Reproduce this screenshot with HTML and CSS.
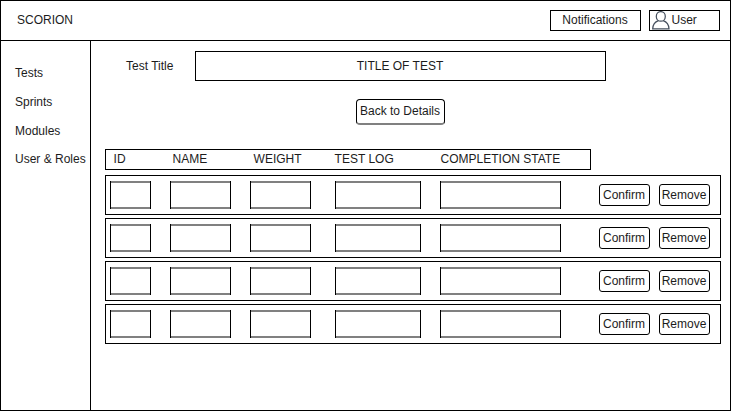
FILE: index.html
```html
<!DOCTYPE html>
<html lang="en">
<head>
<meta charset="utf-8">
<title>Scorion</title>
<link rel="stylesheet" href="styles.css">
</head>
<body>
<div class="window">
  <header class="topbar">
    <div class="brand">SCORION</div>
    <div class="notifications">Notifications</div>
    <div class="user">
      <svg class="avatar" viewBox="0 0 18 19" width="18" height="19" fill="none" stroke="#46505e" stroke-width="1.25">
        <ellipse cx="8.8" cy="5.4" rx="4.5" ry="4.8"/>
        <path d="M6.4 9.6C3 10.8 .9 13.4 .7 17.8H17C16.8 13.4 14.7 10.8 11.2 9.6"/>
      </svg>
      <span>User</span>
    </div>
  </header>
  <div class="body">
    <nav class="sidebar">
      <a>Tests</a>
      <a>Sprints</a>
      <a>Modules</a>
      <a class="last">User &amp; Roles</a>
    </nav>
    <main class="content">
      <div class="title-row">
        <label>Test Title</label>
        <div class="title-box">TITLE OF TEST</div>
      </div>
      <button class="back">Back to Details</button>
      <div class="table-head">
        <span>ID</span><span>NAME</span><span>WEIGHT</span><span>TEST LOG</span><span>COMPLETION STATE</span>
      </div>
      <div class="rows">
        <div class="row"><i></i><i></i><i></i><i></i><i></i><button>Confirm</button><button>Remove</button></div>
        <div class="row"><i></i><i></i><i></i><i></i><i></i><button>Confirm</button><button>Remove</button></div>
        <div class="row"><i></i><i></i><i></i><i></i><i></i><button>Confirm</button><button>Remove</button></div>
        <div class="row"><i></i><i></i><i></i><i></i><i></i><button>Confirm</button><button>Remove</button></div>
      </div>
    </main>
  </div>
</div>
</body>
</html>
```
FILE: styles.css
```css
* {
  box-sizing: border-box;
}

body {
  margin: 0;
  background: #fff;
  color: #1c1c1c;
  font: 12px/14px "Liberation Sans", Arial, sans-serif;
  white-space: nowrap;
}

.window {
  display: flex;
  flex-direction: column;
  width: 731px;
  height: 411px;
  border: 1px solid #000;
}

.topbar {
  display: flex;
  height: 40px;
  padding: 9px 10px 0 16px;
  border-bottom: 1px solid #000;
}

.brand {
  flex: 1;
  padding-top: 3px;
}

.notifications {
  width: 91px;
  height: 21px;
  margin-right: 8px;
  padding: 2px 1px 0 0;
  border: 1px solid #000;
  text-align: center;
}

.user {
  display: flex;
  width: 71px;
  height: 21px;
  padding: 2px 0 0 2px;
  border: 1px solid #000;
}

.avatar {
  flex: none;
  margin: -2px 1.5px 0 0;
}

.body {
  display: flex;
  flex: 1;
}

.sidebar {
  display: flex;
  flex-direction: column;
  gap: 15px;
  width: 90px;
  padding: 25px 0 0 14px;
  border-right: 1px solid #000;
}

.sidebar .last {
  margin-top: -1px;
}

.content {
  flex: 1;
  padding: 10px 9px 0 14px;
}

.title-row {
  display: flex;
  height: 30px;
}

.title-row label {
  width: 90px;
  padding: 8px 0 0 21px;
}

.title-box {
  width: 411px;
  padding: 7px 1px 0 0;
  border: 1px solid #000;
  text-align: center;
}

button {
  padding: 0 1px 0 0;
  border: 1px solid #000;
  border-radius: 3px;
  background: #fff;
  color: inherit;
  font: inherit;
}

.back {
  display: block;
  width: 89px;
  height: 26px;
  margin: 18px 0 0 251px;
  padding-bottom: 1px;
  border-radius: 4px;
  border-bottom: 2px solid #808080;
}

.table-head {
  display: grid;
  grid-template-columns: 59px 81px 81px 106px auto;
  width: 486px;
  height: 21px;
  margin-top: 24px;
  padding: 2px 0 0 7.6px;
  border: 1px solid #000;
}

.rows {
  display: grid;
  gap: 3px;
  margin-top: 5px;
}

.row {
  display: grid;
  grid-template-columns: 41px 61px 61px 86px 121px 51px 51px;
  column-gap: 19px;
  align-items: start;
  height: 40px;
  padding: 5px 0 0 4px;
  border: 1px solid #000;
}

.row i {
  height: 28px;
  border: solid #000;
  border-width: 0 1px;
  box-shadow: inset 0 2px #808080, inset 0 -2px #808080;
}

.row i:nth-child(4),
.row i:nth-child(5) {
  margin-left: 5px;
  margin-right: -5px;
}

.row button {
  height: 22px;
  margin: 3px 0 0 24px;
  width: 51px;
}

.row button:last-child {
  margin-left: 14px;
}
```
